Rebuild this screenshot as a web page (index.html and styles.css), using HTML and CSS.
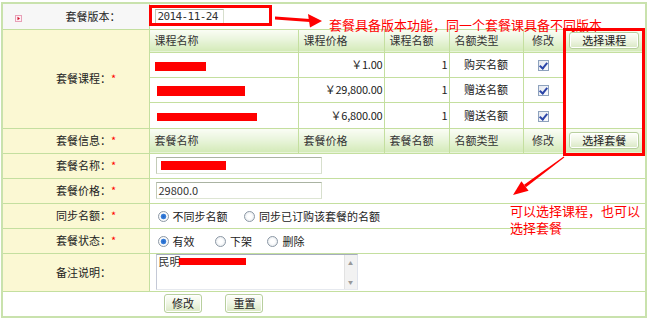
FILE: index.html
```html
<!DOCTYPE html>
<html lang="zh-CN">
<head>
  <meta charset="UTF-8">
  <title>套餐编辑</title>
  <link rel="stylesheet" href="styles.css">
</head>
<body>
  <div class="page">
    <table class="form">
      <colgroup>
        <col class="c-label">
        <col class="c-name">
        <col class="c-price">
        <col class="c-quota">
        <col class="c-type">
        <col class="c-edit">
        <col class="c-act">
      </colgroup>
      <tr class="r-version">
        <td class="label label-top">
          <svg class="flag" width="7" height="7" viewBox="0 0 7 7"><rect x="0.5" y="0.5" width="6" height="6" fill="#fdf0f4" stroke="#e8a0b8"/><path d="M2.5 1.8 L5 3.5 L2.5 5.2 Z" fill="#d0102a"/></svg>
          <span>套餐版本：</span>
        </td>
        <td class="val" colspan="6"><div class="ipt ipt-date">2014-11-24</div></td>
      </tr>
      <tr class="r-head">
        <td class="label" rowspan="4">套餐课程：<em>*</em></td>
        <th>课程名称</th>
        <th>课程价格</th>
        <th>课程名额</th>
        <th>名额类型</th>
        <th class="center">修改</th>
        <th class="act"><button class="btn btn-pick">选择课程</button></th>
      </tr>
      <tr class="r-item">
        <td><span class="mask mask-1"></span></td>
        <td class="num">￥1.00</td>
        <td class="num">1</td>
        <td class="center">购买名额</td>
        <td class="center"><span class="chk"></span></td>
        <td class="act" rowspan="3"></td>
      </tr>
      <tr class="r-item">
        <td><span class="mask mask-2"></span></td>
        <td class="num">￥29,800.00</td>
        <td class="num">1</td>
        <td class="center">赠送名额</td>
        <td class="center"><span class="chk"></span></td>
      </tr>
      <tr class="r-item r-last">
        <td><span class="mask mask-3"></span></td>
        <td class="num">￥6,800.00</td>
        <td class="num">1</td>
        <td class="center">赠送名额</td>
        <td class="center"><span class="chk"></span></td>
      </tr>
      <tr class="r-head r-head2">
        <td class="label">套餐信息：<em>*</em></td>
        <th>套餐名称</th>
        <th>套餐价格</th>
        <th>套餐名额</th>
        <th>名额类型</th>
        <th class="center">修改</th>
        <th class="act"><button class="btn btn-pick">选择套餐</button></th>
      </tr>
      <tr class="r-field">
        <td class="label">套餐名称：<em>*</em></td>
        <td class="val" colspan="6"><div class="ipt ipt-wide"><span class="mask mask-4"></span></div></td>
      </tr>
      <tr class="r-field">
        <td class="label">套餐价格：<em>*</em></td>
        <td class="val" colspan="6"><div class="ipt ipt-wide">29800.0</div></td>
      </tr>
      <tr class="r-field">
        <td class="label">同步名额：<em>*</em></td>
        <td class="val" colspan="6">
          <span class="radio on"><i></i>不同步名额</span>
          <span class="radio"><i></i>同步已订购该套餐的名额</span>
        </td>
      </tr>
      <tr class="r-field">
        <td class="label">套餐状态：<em>*</em></td>
        <td class="val" colspan="6">
          <span class="radio on r-first"><i></i>有效</span>
          <span class="radio r-mid"><i></i>下架</span>
          <span class="radio"><i></i>删除</span>
        </td>
      </tr>
      <tr class="r-memo">
        <td class="label">备注说明：</td>
        <td class="val" colspan="6">
          <div class="memo">
            <div class="memo-text">民明<span class="mask mask-5"></span></div>
            <div class="memo-bar"><span>&#9650;</span><span>&#9660;</span></div>
          </div>
        </td>
      </tr>
      <tr class="r-btns">
        <td colspan="7">
          <button class="btn btn-form">修改</button>
          <button class="btn btn-form">重置</button>
        </td>
      </tr>
    </table>

    <div class="mark mark-version"></div>
    <div class="mark mark-pick"></div>
    <svg class="arrows" width="650" height="320" viewBox="0 0 650 320">
      <polygon points="275,16.5 310,19 310,22 275,19.5" fill="#f00"/>
      <polygon points="308,14 322,21 310,27.5" fill="#f00"/>
      <polygon points="564.3,157.4 563.7,156.6 524.1,184.8 525.9,187.2" fill="#f00"/>
      <polygon points="513,195 521.4,181.2 528.6,190.8" fill="#f00"/>
    </svg>
    <div class="note note-1">套餐具备版本功能，同一个套餐课具备不同版本</div>
    <div class="note note-2">可以选择课程，也可以<br>选择套餐</div>
  </div>
</body>
</html>
```

FILE: styles.css
```css
body {
  margin: 0;
  font-family: "Noto Sans CJK SC", "Liberation Sans", sans-serif;
  font-size: 11px;
  color: #222;
  background: #fff;
}

.page {
  position: relative;
  width: 650px;
  height: 320px;
  padding: 2px 0 0 1px;
  box-sizing: border-box;
  overflow: hidden;
}

.form {
  border-collapse: collapse;
  table-layout: fixed;
  width: 646px;
  border: 2px solid #c9e2ad;
}

.c-label { width: 147px; }
.c-name { width: 149px; }
.c-price { width: 86px; }
.c-quota { width: 65px; }
.c-type { width: 74px; }
.c-edit { width: 40px; }
.c-act { width: 83px; }

.form td,
.form th {
  border: 1px solid #c4df9f;
  padding: 0 5px;
  font-weight: normal;
  text-align: left;
  white-space: nowrap;
  line-height: 13px;
  overflow: hidden;
}

.form .center { text-align: center; }
.form .num { text-align: right; padding-right: 1px; letter-spacing: -0.2px; }

.r-version { height: 26px; }
.r-head { height: 23px; }
.r-head2 { height: 25px; }
.r-item { height: 25px; }
.r-last { height: 26px; }
.r-field { height: 25px; }
.r-memo { height: 38px; }
.r-btns { height: 26px; }

.label {
  background: #fbf8d3;
  padding-left: 53px !important;
  color: #222;
}

.label em {
  color: #f00;
  font-style: normal;
  margin-left: 0;
}

.label-top {
  background: #f7f7f7;
  padding-left: 12px !important;
}

.label-top .flag {
  vertical-align: -1px;
  margin-right: 41px;
}

.form th {
  background: linear-gradient(#fbfdf6 0%, #eaf5dd 45%, #d3eab7 100%);
  color: #333;
}

.form .act {
  padding: 0 5px;
  text-align: center;
}

.val { padding-left: 6px !important; }

.mask {
  display: inline-block;
  background: #f00;
  vertical-align: middle;
}

.mask-1 { width: 51px; height: 9px; }
.mask-2 { width: 88px; height: 10px; margin-left: 2px; }
.mask-3 { width: 100px; height: 8px; margin-left: 2px; }
.mask-4 { width: 65px; height: 9px; margin-left: 2px; }
.mask-5 { width: 67px; height: 7px; margin-left: -2px; vertical-align: 1px; }

.chk {
  display: inline-block;
  width: 9px;
  height: 9px;
  border: 1px solid #8ea2bd;
  background: linear-gradient(135deg, #e6e9f0, #fafbfd);
  vertical-align: middle;
  position: relative;
}

.chk::after {
  content: "";
  position: absolute;
  left: 2px;
  top: 0;
  width: 3px;
  height: 6px;
  border: solid #2b45a8;
  border-width: 0 2px 2px 0;
  transform: rotate(40deg);
}

.btn {
  font-family: inherit;
  font-size: 11px;
  color: #222;
  border: 1px solid #b8cf9e;
  border-radius: 3px;
  background: linear-gradient(#fefffb 0%, #eef5e3 50%, #d9e8c3 100%);
  box-shadow: inset 0 0 0 1px #fff;
  padding: 0;
  line-height: 13px;
  vertical-align: middle;
}

.btn-pick {
  width: 70px;
  height: 17px;
}

.btn-form {
  width: 38px;
  height: 19px;
}

.btn-form + .btn-form { margin-left: 21px; }

.r-btns td {
  padding-left: 161px !important;
}

.ipt {
  box-sizing: border-box;
  border: 1px solid;
  border-color: #aab3a2 #d7dfcd #dde5d3 #c3ccb8;
  background: #fff;
  font-family: "DejaVu Sans Mono", monospace;
  font-size: 11px;
  color: #333;
  padding: 0 2px;
  display: flex;
  align-items: center;
}

.ipt-date {
  width: 69px;
  height: 15px;
  margin-left: -1px;
  letter-spacing: -0.6px;
}

.ipt-wide {
  width: 166px;
  height: 17px;
  font-family: "Noto Sans CJK SC", sans-serif;
}

.radio {
  display: inline-flex;
  align-items: center;
  gap: 4px;
  margin-left: 2px;
  margin-right: 12px;
  vertical-align: middle;
}

.radio i {
  width: 9px;
  height: 9px;
  border-radius: 50%;
  border: 1px solid #8d99a6;
  background: radial-gradient(#ffffff 30%, #dde2e7);
}

.radio.on i {
  background: radial-gradient(circle, #1f63c6 0, #3f84dc 2.5px, #fff 3.2px, #e6eaee);
}

.radio.r-first { margin-right: 16px; }
.radio.r-mid { margin-right: 11px; }

.memo {
  display: flex;
  width: 202px;
  height: 36px;
  box-sizing: border-box;
  border: 1px solid;
  border-color: #a6adbd #dfe3ec #e6e9ef #c4c9d6;
}

.memo-text {
  flex: 1;
  padding: 0 2px;
  line-height: 13px;
  color: #333;
}

.memo-bar {
  width: 12px;
  background: #f2f2f2;
  border-left: 1px solid #e2e2e2;
  display: flex;
  flex-direction: column;
  justify-content: space-between;
  align-items: center;
  font-size: 5px;
  color: #999;
  padding: 5px 0 4px;
  line-height: 6px;
}

.mark {
  position: absolute;
  border: 3px solid #f00;
  box-sizing: border-box;
}

.mark-version {
  left: 149px;
  top: 5px;
  width: 123px;
  height: 21px;
}

.mark-pick {
  left: 563px;
  top: 28px;
  width: 82px;
  height: 128px;
}

.arrows {
  position: absolute;
  left: 0;
  top: 0;
  pointer-events: none;
}

.note {
  position: absolute;
  color: #f00;
  font-size: 13px;
  line-height: 17px;
  white-space: nowrap;
}

.note-1 {
  left: 329px;
  top: 18px;
  line-height: 14px;
}

.note-2 {
  left: 510px;
  top: 202px;
}
```
